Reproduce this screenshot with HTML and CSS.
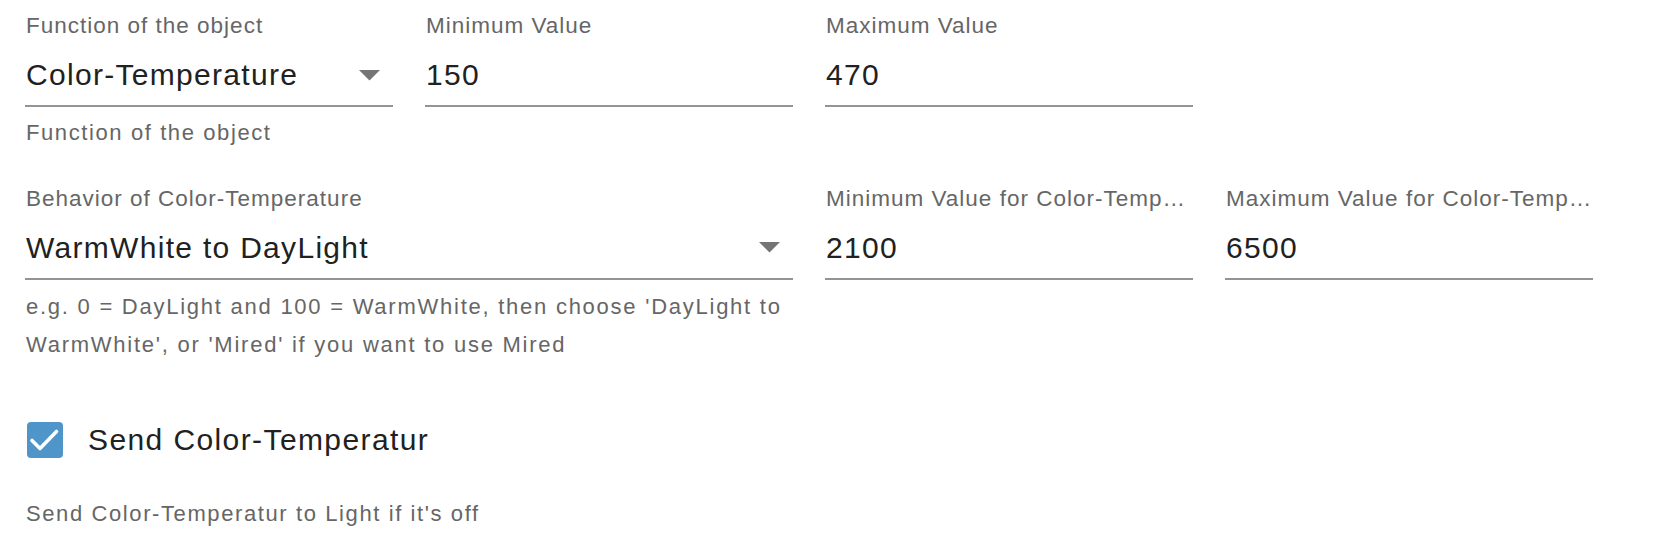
FILE: index.html
```html
<!DOCTYPE html>
<html lang="en">
<head>
<meta charset="utf-8">
<title>Color-Temperature settings</title>
<link rel="stylesheet" href="styles.css">
</head>
<body>
<div class="form">
  <div class="grid">
    <div class="field">
      <label class="label">Function of the object</label>
      <div class="control">
        <span class="value">Color-Temperature</span>
        <svg class="arrow" width="21" height="11" viewBox="0 0 21 11"><path d="M0 0 L21 0 L10.5 10.5 Z" fill="#757575"/></svg>
      </div>
      <p class="helper">Function of the object</p>
    </div>
    <div class="field">
      <label class="label">Minimum Value</label>
      <div class="control"><span class="value">150</span></div>
    </div>
    <div class="field">
      <label class="label">Maximum Value</label>
      <div class="control"><span class="value">470</span></div>
    </div>
    <div class="field empty"></div>

    <div class="field span2">
      <label class="label">Behavior of Color-Temperature</label>
      <div class="control">
        <span class="value">WarmWhite to DayLight</span>
        <svg class="arrow" width="21" height="11" viewBox="0 0 21 11"><path d="M0 0 L21 0 L10.5 10.5 Z" fill="#757575"/></svg>
      </div>
      <p class="helper helper-wide">e.g. 0 = DayLight and 100 = WarmWhite, then choose 'DayLight to WarmWhite', or 'Mired' if you want to use Mired</p>
    </div>
    <div class="field">
      <label class="label">Minimum Value for Color-Temp…</label>
      <div class="control"><span class="value">2100</span></div>
    </div>
    <div class="field">
      <label class="label">Maximum Value for Color-Temp…</label>
      <div class="control"><span class="value">6500</span></div>
    </div>
  </div>

  <label class="check-row">
    <svg class="checkbox" width="36" height="36" viewBox="0 0 36 36">
      <rect x="0" y="0" width="36" height="36" rx="4" fill="#4f95c9"/>
      <polyline points="5,18.5 13,26.5 29.5,9.5" fill="none" stroke="#ffffff" stroke-width="3.6" stroke-linecap="round" stroke-linejoin="round"/>
    </svg>
    <span class="check-label">Send Color-Temperatur</span>
  </label>
  <p class="helper helper-bottom">Send Color-Temperatur to Light if it's off</p>
</div>
</body>
</html>
```

FILE: styles.css
```css
* {
  box-sizing: border-box;
}

body {
  margin: 0;
  background: #ffffff;
  font-family: "Liberation Sans", Arial, Helvetica, sans-serif;
}

.form {
  padding: 13px 0 0 25px;
}

.grid {
  display: grid;
  grid-template-columns: repeat(4, 368px);
  column-gap: 32px;
  row-gap: 33.5px;
}

.field {
  display: flex;
  flex-direction: column;
  min-width: 0;
}

.span2 {
  grid-column: span 2;
}

.label {
  display: block;
  font-size: 22.5px;
  line-height: 25px;
  letter-spacing: 1px;
  color: #666666;
  white-space: nowrap;
  overflow: hidden;
  padding-left: 1px;
}

.control {
  display: flex;
  align-items: center;
  padding: 19px 0 12px 1px;
  border-bottom: 2px solid #949494;
}

.value {
  flex: 1;
  font-size: 30px;
  line-height: 36px;
  letter-spacing: 1.3px;
  color: #212121;
  white-space: nowrap;
}

.arrow {
  display: block;
  margin-right: 13px;
  margin-top: 0;
}

.helper {
  margin: 7px 0 0;
  padding-left: 1px;
  font-size: 22px;
  line-height: 38px;
  letter-spacing: 1.6px;
  color: #666666;
}

.helper-wide {
  margin-top: 8px;
  letter-spacing: 1.75px;
}

.check-row {
  display: flex;
  align-items: center;
  gap: 25px;
  margin-top: 58px;
  padding-left: 2px;
  height: 36px;
}

.checkbox {
  display: block;
  flex: none;
}

.check-label {
  font-size: 30px;
  line-height: 36px;
  letter-spacing: 1.4px;
  color: #212121;
}

.helper-bottom {
  margin-top: 37px;
}
```
